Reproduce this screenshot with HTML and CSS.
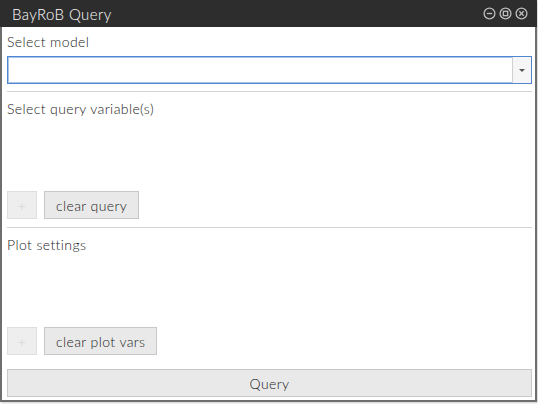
FILE: index.html
```html
<!DOCTYPE html>
<html>
<head>
<meta charset="utf-8">
<link rel="stylesheet" href="styles.css">
</head>
<body>
<div class="window">
  <div class="titlebar">
    <span class="title">BayRoB Query</span>
    <div class="controls">
      <svg class="ctl" viewBox="0 0 12 12"><circle cx="6" cy="6" r="5" /><line x1="3.5" y1="6" x2="8.5" y2="6"/></svg>
      <svg class="ctl" viewBox="0 0 12 12"><circle cx="6" cy="6" r="5" /><rect x="4" y="4" width="4" height="4"/></svg>
      <svg class="ctl" viewBox="0 0 12 12"><circle cx="6" cy="6" r="5" /><line x1="4" y1="4" x2="8" y2="8"/><line x1="8" y1="4" x2="4" y2="8"/></svg>
    </div>
  </div>
  <div class="content">
    <div class="label first">Select model</div>
    <div class="combo">
      <div class="combo-field"></div>
      <div class="combo-btn"><span class="arrow"></span></div>
    </div>
    <div class="sep"></div>
    <div class="label">Select query variable(s)</div>
    <div class="area"></div>
    <div class="btnrow">
      <button class="btn plus" disabled>+</button>
      <button class="btn">clear query</button>
    </div>
    <div class="sep sep-low"></div>
    <div class="label">Plot settings</div>
    <div class="area"></div>
    <div class="btnrow">
      <button class="btn plus" disabled>+</button>
      <button class="btn">clear plot vars</button>
    </div>
    <button class="btn wide">Query</button>
  </div>
</div>
</body>
</html>
```
FILE: styles.css
```css
html, body {
  margin: 0;
  padding: 0;
  background: #ffffff;
}
body {
  width: 538px;
  height: 404px;
  overflow: hidden;
  font-family: "Lato", "DejaVu Sans", sans-serif;
  font-size: 14px;
  font-weight: 300;
  letter-spacing: 0.4px;
  color: #222222;
}
.window {
  width: 533px;
  height: 400px;
  border: 2px solid #6e6e6e;
  border-top: none;
  display: flex;
  flex-direction: column;
  box-shadow: 1px 1px 2px rgba(0,0,0,0.2);
}
.titlebar {
  height: 27px;
  margin: 0 -2px;
  background: #2d2d2d;
  display: flex;
  align-items: center;
  justify-content: space-between;
  padding: 0 9px 0 12px;
}
.title {
  color: #ffffff;
  font-size: 15px;
  font-weight: 300;
}
.controls {
  display: flex;
  gap: 3px;
}
.ctl {
  width: 13px;
  height: 13px;
  fill: none;
  stroke: #bdbdbd;
  stroke-width: 1.2;
}
.content {
  flex: 1;
  display: flex;
  flex-direction: column;
  padding: 0 3px 0 5px;
}
.label {
  height: 18px;
  line-height: 18px;
  margin-top: 8px;
}
.label.first {
  margin-top: 6px;
}
.combo {
  margin-top: 5px;
  height: 28px;
  box-sizing: border-box;
  border: 1px solid #4f86cf;
  box-shadow: 0 0 0 1px #a8c4ea inset;
  display: flex;
}
.combo-field {
  flex: 1;
}
.combo-btn {
  width: 18px;
  border-left: 1px solid #d0d0d0;
  background: #f6f6f6;
  display: flex;
  align-items: center;
  justify-content: center;
}
.arrow {
  width: 0;
  height: 0;
  border-left: 3px solid transparent;
  border-right: 3px solid transparent;
  border-top: 3px solid #555;
}
.sep {
  height: 1px;
  background: #d4d4d4;
  margin-top: 7px;
}
.sep.sep-low {
  margin-top: 8px;
}
.area {
  flex: 1;
}
.btnrow {
  display: flex;
  gap: 7px;
  height: 28px;
}
.btn {
  font-family: inherit;
  font-size: 14px;
  font-weight: 300;
  letter-spacing: 0.4px;
  color: #222222;
  background: #e9e9e9;
  border: 1px solid #c8c8c8;
  height: 28px;
  padding: 0 11px;
  margin: 0;
}
.btn.plus {
  width: 30px;
  padding: 0;
  color: #d0d0d0;
  border-color: #dedede;
  background: #eeeeee;
}
.btn.wide {
  margin-top: 14px;
  margin-bottom: 3px;
  width: 100%;
}
```
